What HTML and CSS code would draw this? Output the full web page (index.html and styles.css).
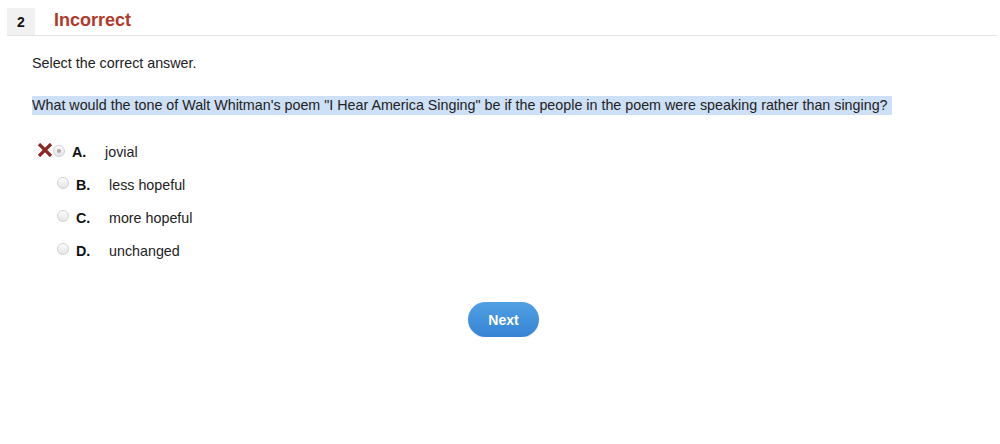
FILE: index.html
```html
<!DOCTYPE html>
<html>
<head>
<meta charset="utf-8">
<link rel="stylesheet" href="styles.css">
</head>
<body>
<div class="page">
  <div class="header">
    <div class="num">2</div>
    <div class="status">Incorrect</div>
  </div>
  <div class="content">
    <p class="instr">Select the correct answer.</p>
    <p class="question"><span class="hl">What would the tone of Walt Whitman's poem "I Hear America Singing" be if the people in the poem were speaking rather than singing?&nbsp;</span></p>
    <div class="options">
      <div class="opt wrong">
        <svg class="xmark" width="16" height="14" viewBox="0 0 16 14"><path d="M2 1 L14 13 M14 1 L2 13" stroke="#8e2525" stroke-width="3.2" stroke-linecap="butt"/></svg>
        <span class="radio checked"></span>
        <span class="letter">A.</span>
        <span class="txt">jovial</span>
      </div>
      <div class="opt">
        <span class="radio"></span>
        <span class="letter">B.</span>
        <span class="txt">less hopeful</span>
      </div>
      <div class="opt">
        <span class="radio"></span>
        <span class="letter">C.</span>
        <span class="txt">more hopeful</span>
      </div>
      <div class="opt">
        <span class="radio"></span>
        <span class="letter">D.</span>
        <span class="txt">unchanged</span>
      </div>
    </div>
    <div class="actions">
      <button class="next">Next</button>
    </div>
  </div>
</div>
</body>
</html>
```
FILE: styles.css
```css
html, body { margin: 0; padding: 0; background: #fff; }
body { font-family: "Liberation Sans", Arial, sans-serif; font-size: 14.3px; color: #222; }
.page { padding: 8px 3px 0 7px; }
.header { display: flex; align-items: stretch; height: 27px; border-bottom: 1px solid #e2e2e2; }
.num { width: 28px; background: #f1f1f1; font-weight: bold; font-size: 14px; color: #111; display: flex; align-items: center; justify-content: center; }
.status { color: #b23a2a; font-weight: bold; font-size: 18px; margin-left: 19px; line-height: 24px; }
.content { padding-left: 25px; }
.instr { margin: 18px 0 0 0; line-height: 18px; }
.question { margin: 24px 0 0 0; line-height: 18px; }
.hl { background: #cde0f5; padding: 1px 0 2px; }
.options { margin-top: 29px; display: flex; flex-direction: column; gap: 15px; }
.opt { display: flex; align-items: center; height: 18px; padding-left: 25px; }
.opt.wrong { padding-left: 5px; }
.xmark { display: block; margin-right: 0; margin-top: -4px; }
.radio { width: 12px; height: 12px; border-radius: 50%; border: 1px solid #d2d2d2; background: linear-gradient(#fdfdfd, #e4e4e4); box-sizing: border-box; margin-right: 7px; margin-top: -4px; position: relative; }
.opt.wrong .radio { margin-right: 7px; margin-top: -3px; }
.radio.checked::after { content: ""; position: absolute; left: 3px; top: 3px; width: 4px; height: 4px; border-radius: 50%; background: #a9a9a9; }
.letter { font-weight: bold; width: 33px; color: #111; }
.txt { color: #222; }
.actions { display: flex; justify-content: center; margin-top: 42px; padding-right: 22px; }
.next { width: 71px; height: 35px; border-radius: 18px; border: none; background: linear-gradient(#50a0e4, #3683d4); color: #fff; font-family: "Liberation Sans", Arial, sans-serif; font-weight: bold; font-size: 14px; box-shadow: 0 1px 1px rgba(0,0,0,0.1); }
```
